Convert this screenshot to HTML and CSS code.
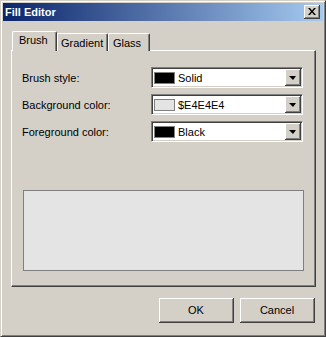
FILE: index.html
```html
<!DOCTYPE html>
<html lang="en">
  <head>
    <meta charset="utf-8">
    <title>Fill Editor</title>
    <link rel="stylesheet" href="styles.css">
  </head>
  <body>
    <div class="window">
      <div class="titlebar">
        <span class="title">Fill Editor</span>
        <span class="close">
          <svg width="8" height="7" viewBox="0 0 8 7">
            <path d="M0 0h2l2 2.5 2-2.5h2l-3 3.5 3 3.5h-2l-2-2.5-2 2.5h-2l3-3.5z" fill="#000"/>
          </svg>
        </span>
      </div>

      <div class="tabs">
        <span class="tab active tab-brush">Brush</span>
        <span class="tab tab-gradient">Gradient</span>
        <span class="tab tab-glass">Glass</span>
      </div>

      <div class="panel">
        <div class="row">
          <label>Brush style:</label>
          <div class="combo">
            <span class="swatch black"></span>
            <span class="value">Solid</span>
            <span class="drop"><span class="arrow"></span></span>
          </div>
        </div>
        <div class="row">
          <label>Background color:</label>
          <div class="combo">
            <span class="swatch light"></span>
            <span class="value">$E4E4E4</span>
            <span class="drop"><span class="arrow"></span></span>
          </div>
        </div>
        <div class="row">
          <label>Foreground color:</label>
          <div class="combo">
            <span class="swatch black"></span>
            <span class="value">Black</span>
            <span class="drop"><span class="arrow"></span></span>
          </div>
        </div>
        <div class="preview"></div>
      </div>

      <div class="buttons">
        <button type="button">OK</button>
        <button type="button">Cancel</button>
      </div>
    </div>
  </body>
</html>
```

FILE: styles.css
```css
body {
  margin: 0;
  background: #d4d0c8;
  font-family: "Liberation Sans", sans-serif;
  font-size: 11px;
  color: #000;
}
.window {
  box-sizing: border-box;
  width: 326px;
  height: 337px;
  padding: 1px;
  background: #d4d0c8;
  border-top: 1px solid #d4d0c8;
  border-left: 1px solid #d4d0c8;
  border-right: 1px solid #404040;
  border-bottom: 1px solid #404040;
  box-shadow: inset 1px 1px #fff, inset -1px -1px #808080;
}
.titlebar {
  height: 18px;
  margin: 1px 1px 0 1px;
  display: flex;
  align-items: center;
  justify-content: space-between;
  padding: 0 3px 0 2px;
  background: linear-gradient(to right, #0a246a, #a6caf0);
}
.title {
  font-weight: bold;
  color: #fff;
}
.close {
  box-sizing: border-box;
  width: 16px;
  height: 14px;
  display: flex;
  align-items: center;
  justify-content: center;
  background: #d4d0c8;
  border-right: 1px solid #404040;
  border-bottom: 1px solid #404040;
  box-shadow: inset 1px 1px #fff, inset -1px -1px #808080;
}

/* tabs */
.tabs {
  display: flex;
  align-items: flex-end;
  height: 20px;
  margin: 10px 0 -1px 10px;
  position: relative;
  z-index: 1;
}
.tab {
  box-sizing: border-box;
  height: 18px;
  padding: 3px 0 0 3px;
  border-top: 1px solid #fff;
  border-left: 1px solid #fff;
  border-right: 1px solid #404040;
  box-shadow: inset -1px 0 #808080;
  border-radius: 2px 2px 0 0;
  background: #d4d0c8;
  white-space: nowrap;
}
.tab.active {
  height: 20px;
  padding: 2px 0 0 6px;
}
.tab-brush {
  width: 45px;
}
.tab-gradient {
  width: 51px;
}
.tab-glass {
  width: 42px;
  padding-left: 4px;
}

/* panel */
.panel {
  box-sizing: border-box;
  width: 305px;
  height: 237px;
  margin-left: 9px;
  padding: 16px 10px 14px 11px;
  border-top: 1px solid #fff;
  border-left: 1px solid #fff;
  border-right: 1px solid #404040;
  border-bottom: 1px solid #404040;
  box-shadow: inset -1px -1px #808080;
  display: flex;
  flex-direction: column;
  gap: 6px;
}
.row {
  display: flex;
  align-items: center;
  height: 21px;
}
.row label {
  width: 129px;
  margin-left: -1px;
}
.combo {
  box-sizing: border-box;
  width: 152px;
  height: 21px;
  display: flex;
  align-items: center;
  padding: 0 0 0 2px;
  background: #fff;
  border-top: 1px solid #808080;
  border-left: 1px solid #808080;
  border-right: 1px solid #fff;
  border-bottom: 1px solid #fff;
  box-shadow: inset 1px 1px #404040, inset -1px -1px #d4d0c8;
}
.swatch {
  box-sizing: border-box;
  width: 21px;
  height: 12px;
  border: 1px solid #808080;
}
.swatch.black {
  background: #000;
}
.swatch.light {
  background: #e4e4e4;
}
.value {
  flex: 1;
  margin-left: 3px;
}
.drop {
  box-sizing: border-box;
  width: 16px;
  height: 17px;
  margin-right: 1px;
  display: flex;
  align-items: center;
  justify-content: center;
  background: #d4d0c8;
  border-right: 1px solid #404040;
  border-bottom: 1px solid #404040;
  box-shadow: inset 1px 1px #fff, inset -1px -1px #808080;
}
.arrow {
  width: 0;
  height: 0;
  border-left: 4px solid transparent;
  border-right: 3px solid transparent;
  border-top: 4px solid #000;
  margin-top: 1px;
}
.preview {
  box-sizing: border-box;
  width: 281px;
  height: 81px;
  margin-top: 42px;
  background: #e4e4e4;
  border: 1px solid #808080;
}

/* buttons */
.buttons {
  display: flex;
  justify-content: flex-end;
  gap: 6px;
  margin: 11px 9px 0 0;
}
.buttons button {
  box-sizing: border-box;
  width: 75px;
  height: 25px;
  padding: 0;
  font-family: "Liberation Sans", sans-serif;
  font-size: 11px;
  color: #000;
  background: #d4d0c8;
  border: none;
  border-right: 1px solid #404040;
  border-bottom: 1px solid #404040;
  box-shadow: inset 1px 1px #fff, inset -1px -1px #808080;
}
```
